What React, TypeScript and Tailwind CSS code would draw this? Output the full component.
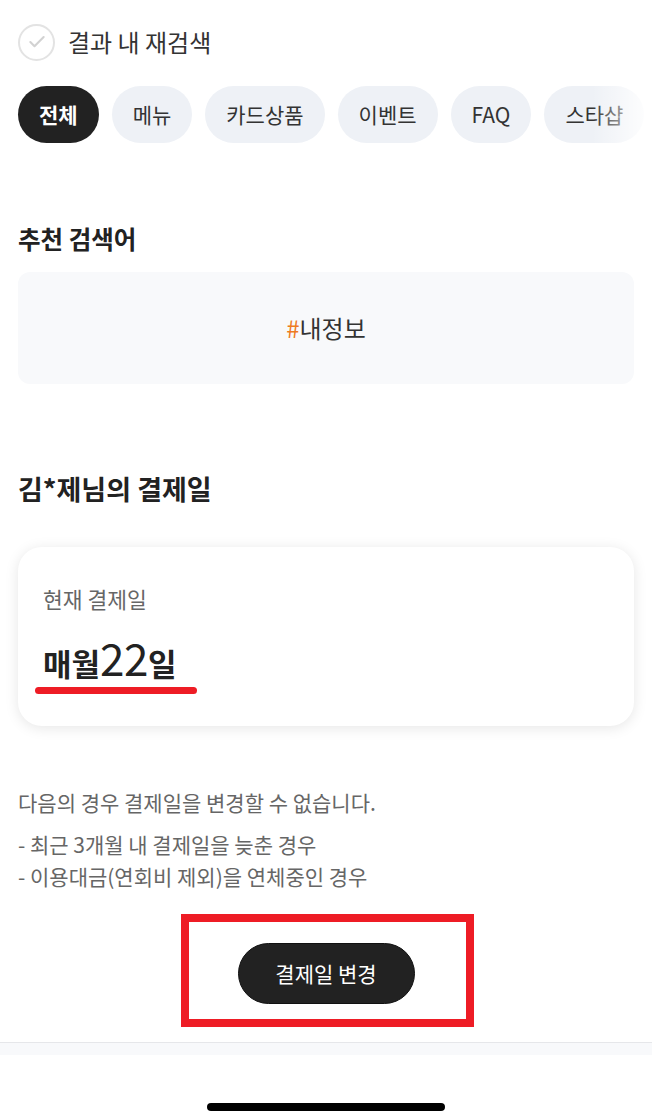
import { Check } from "lucide-react";

const CHIPS = ["전체", "메뉴", "카드상품", "이벤트", "FAQ", "스타샵"];

export default function App() {
  return (
    <div
      className="min-h-[1117px] w-[652px] bg-white text-[#222] flex flex-col"
      style={{ fontFamily: '"Noto Sans CJK KR", "Noto Sans", sans-serif' }}
    >
      <div className="px-[18px] pt-[23px]">
        <div className="flex items-center gap-[13px] h-[38px]">
          <div className="w-[37px] h-[37px] rounded-full border-2 border-[#e3e3e3] flex items-center justify-center">
            <Check size={20} strokeWidth={2.5} className="text-[#d2d2d2]" />
          </div>
          <span className="text-[24px] text-[#333] leading-none">결과 내 재검색</span>
        </div>
      </div>

      {/* category chips */}
      <div className="relative mt-[25px] overflow-hidden">
        <div className="flex gap-[13px] pl-[18px] whitespace-nowrap">
          {CHIPS.map((c, i) => (
            <div
              key={c}
              className={`h-[57px] px-[21px] rounded-full flex items-center text-[21px] shrink-0 ${
                i === 0 ? "bg-[#222] text-white font-bold" : "bg-[#eef1f6] text-[#333]"
              }`}
            >
              {c}
            </div>
          ))}
        </div>
        <div className="absolute right-0 top-0 h-full w-[60px] bg-gradient-to-r from-white/0 to-white" />
      </div>

      <div className="px-[18px]">
        <h2 className="mt-[80px] text-[24.5px] font-bold leading-[32px]">추천 검색어</h2>
        <div className="mt-[17px] h-[112px] rounded-[12px] bg-[#f8f9fb] flex items-center justify-center text-[24px] text-[#333]">
          <span className="text-[#ee7a22]">#</span>내정보
        </div>

        <h2 className="mt-[88px] text-[27px] font-bold leading-[34px]">김*제님의 결제일</h2>

        <div className="relative mt-[41px] h-[179px] rounded-[24px] bg-white shadow-[0_2px_14px_rgba(0,0,0,0.10)] px-[25px] pt-[38px]">
          <div className="text-[21.5px] text-[#666] leading-[28px]">현재 결제일</div>
          <div className="mt-[20px] flex items-baseline leading-[48px]">
            <span className="text-[31px] font-bold">매월</span>
            <span className="text-[44px] font-normal tracking-[-0.5px]">22</span>
            <span className="text-[31px] font-bold">일</span>
          </div>
          <div className="absolute left-[17px] top-[140px] w-[162px] h-[7px] rounded-full bg-[#ee1c25]" />
        </div>

        <p className="mt-[62px] text-[21px] text-[#666] leading-[28px]">다음의 경우 결제일을 변경할 수 없습니다.</p>
        <ul className="mt-[12px] text-[21px] text-[#666] leading-[32px]">
          <li>- 최근 3개월 내 결제일을 늦춘 경우</li>
          <li>- 이용대금(연회비 제외)을 연체중인 경우</li>
        </ul>

        <div className="relative mt-[51px] flex justify-center">
          <button className="h-[61px] w-[177px] rounded-full bg-[#222] border border-[#111] text-white text-[21px]">
            결제일 변경
          </button>
          <div className="absolute left-[163px] top-[-29px] w-[293px] h-[113px] border-[8px] border-[#ee1c25]" />
        </div>
      </div>

      <div className="mt-[38px] border-t border-[#e6e7ea] h-[13px] bg-[#f8f9fb]" />

      <div className="flex-1 flex items-end justify-center pb-[6px]">
        <div className="w-[238px] h-[8px] rounded-full bg-black" />
      </div>
    </div>
  );
}
